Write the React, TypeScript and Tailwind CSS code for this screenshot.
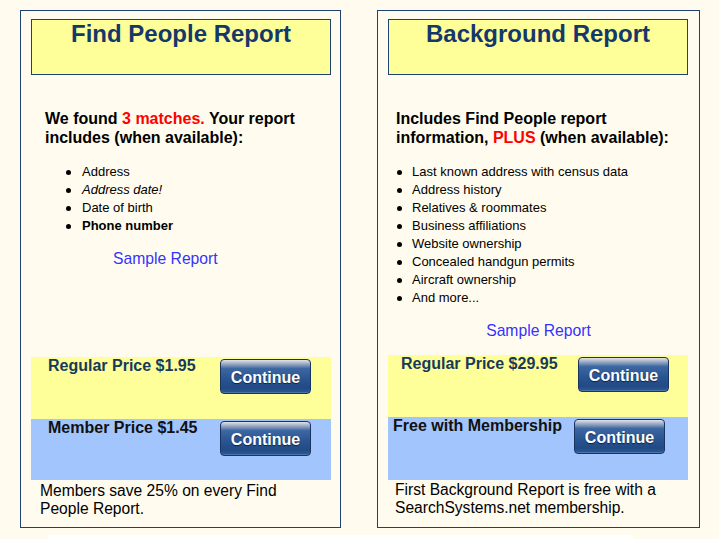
const leftItems: { text: string; style?: string }[] = [
  { text: "Address" },
  { text: "Address date!", style: "italic" },
  { text: "Date of birth" },
  { text: "Phone number", style: "font-bold" },
];

const rightItems = [
  "Last known address with census data",
  "Address history",
  "Relatives & roommates",
  "Business affiliations",
  "Website ownership",
  "Concealed handgun permits",
  "Aircraft ownership",
  "And more...",
];

function ContinueButton({ className = "" }: { className?: string }) {
  return (
    <button
      className={`flex h-[35px] w-[91px] shrink-0 items-center justify-center rounded-[4px] border border-[#1a335f] bg-[linear-gradient(to_bottom,#dfe4ec_0%,#9aa9c2_12%,#3d67a2_26%,#2a5693_55%,#214a85_85%,#2d5a95_100%)] pt-[3px] text-[16px] font-bold text-white shadow-[inset_0_-1px_0_#4a74aa] [text-shadow:0_1px_1px_#0d2142] ${className}`}
    >
      Continue
    </button>
  );
}

function Header({ title }: { title: string }) {
  return (
    <div className="ml-[10px] mt-[8px] h-[56px] w-[300px] border border-[#1f4270] bg-[#ffff99] text-center text-[24px] font-bold leading-[27px] text-[#15386a]">
      {title}
    </div>
  );
}

function Dot() {
  return <span className="h-[5px] w-[5px] shrink-0 rounded-full bg-black" />;
}

export default function App() {
  return (
    <div className="min-h-screen bg-[#fffcef] font-['Liberation_Sans',Arial,sans-serif] text-black">
      <div className="flex gap-[36px] pl-[20px] pt-[10px]">
        {/* Find People */}
        <div className="flex h-[518px] w-[321px] flex-col border border-[#1f4270]">
          <Header title="Find People Report" />
          <p className="ml-[24px] mt-[34px] w-[285px] text-[16px] font-bold leading-[19px]">
            We found <span className="text-[#ff0000]">3 matches.</span> Your report includes (when
            available):
          </p>
          <ul className="mt-[16px] text-[13px] leading-[18px]">
            {leftItems.map((item) => (
              <li key={item.text} className="flex items-center pl-[45px]">
                <Dot />
                <span className={`ml-[11px] ${item.style ?? ""}`}>{item.text}</span>
              </li>
            ))}
          </ul>
          <a className="ml-[92px] mt-[14px] text-[15.7px] leading-[19px] text-[#3333ff]">Sample Report</a>

          <div className="ml-[10px] mt-auto w-[300px]">
            <div className="flex h-[62px] items-start bg-[#ffff99] pl-[17px]">
              <span className="w-[172px] text-[16px] font-bold leading-[18px] text-[#163a5c]">
                Regular Price $1.95
              </span>
              <ContinueButton className="mt-[2px]" />
            </div>
            <div className="flex h-[61px] items-start bg-[#a2c5fd] pl-[17px]">
              <span className="w-[172px] text-[16px] font-bold leading-[18px] text-[#111111]">
                Member Price $1.45
              </span>
              <ContinueButton className="mt-[2px]" />
            </div>
          </div>
          <p className="mb-[9px] ml-[19px] mt-[2px] w-[260px] text-[15.6px] leading-[18px]">
            Members save 25% on every Find People Report.
          </p>
        </div>

        {/* Background */}
        <div className="flex h-[518px] w-[323px] flex-col border border-[#1f4270]">
          <Header title="Background Report" />
          <p className="ml-[18px] mt-[34px] w-[285px] text-[16px] font-bold leading-[19px]">
            Includes Find People report information, <span className="text-[#ff0000]">PLUS</span>{" "}
            (when available):
          </p>
          <ul className="mt-[16px] text-[13px] leading-[18px]">
            {rightItems.map((item) => (
              <li key={item} className="flex items-center pl-[19px]">
                <Dot />
                <span className="ml-[10px]">{item}</span>
              </li>
            ))}
          </ul>
          <a className="mt-[14px] text-center text-[15.7px] leading-[19px] text-[#3333ff]">Sample Report</a>

          <div className="ml-[10px] mt-auto w-[300px]">
            <div className="flex h-[62px] items-start bg-[#ffff99] pl-[13px]">
              <span className="w-[177px] text-[16px] font-bold leading-[18px] text-[#163a5c]">
                Regular Price $29.95
              </span>
              <ContinueButton className="mt-[2px]" />
            </div>
            <div className="flex h-[63px] items-start bg-[#a2c5fd] pl-[5px]">
              <span className="w-[181px] text-[16px] font-bold leading-[18px] text-[#111111]">
                Free with Membership
              </span>
              <ContinueButton className="mt-[2px]" />
            </div>
          </div>
          <p className="mb-[10px] ml-[17px] mt-[1px] w-[290px] text-[15.6px] leading-[18px]">
            First Background Report is free with a SearchSystems.net membership.
          </p>
        </div>
      </div>
      <div className="ml-[48px] mt-[7px] h-[10px] w-[585px] bg-white" />
    </div>
  );
}
